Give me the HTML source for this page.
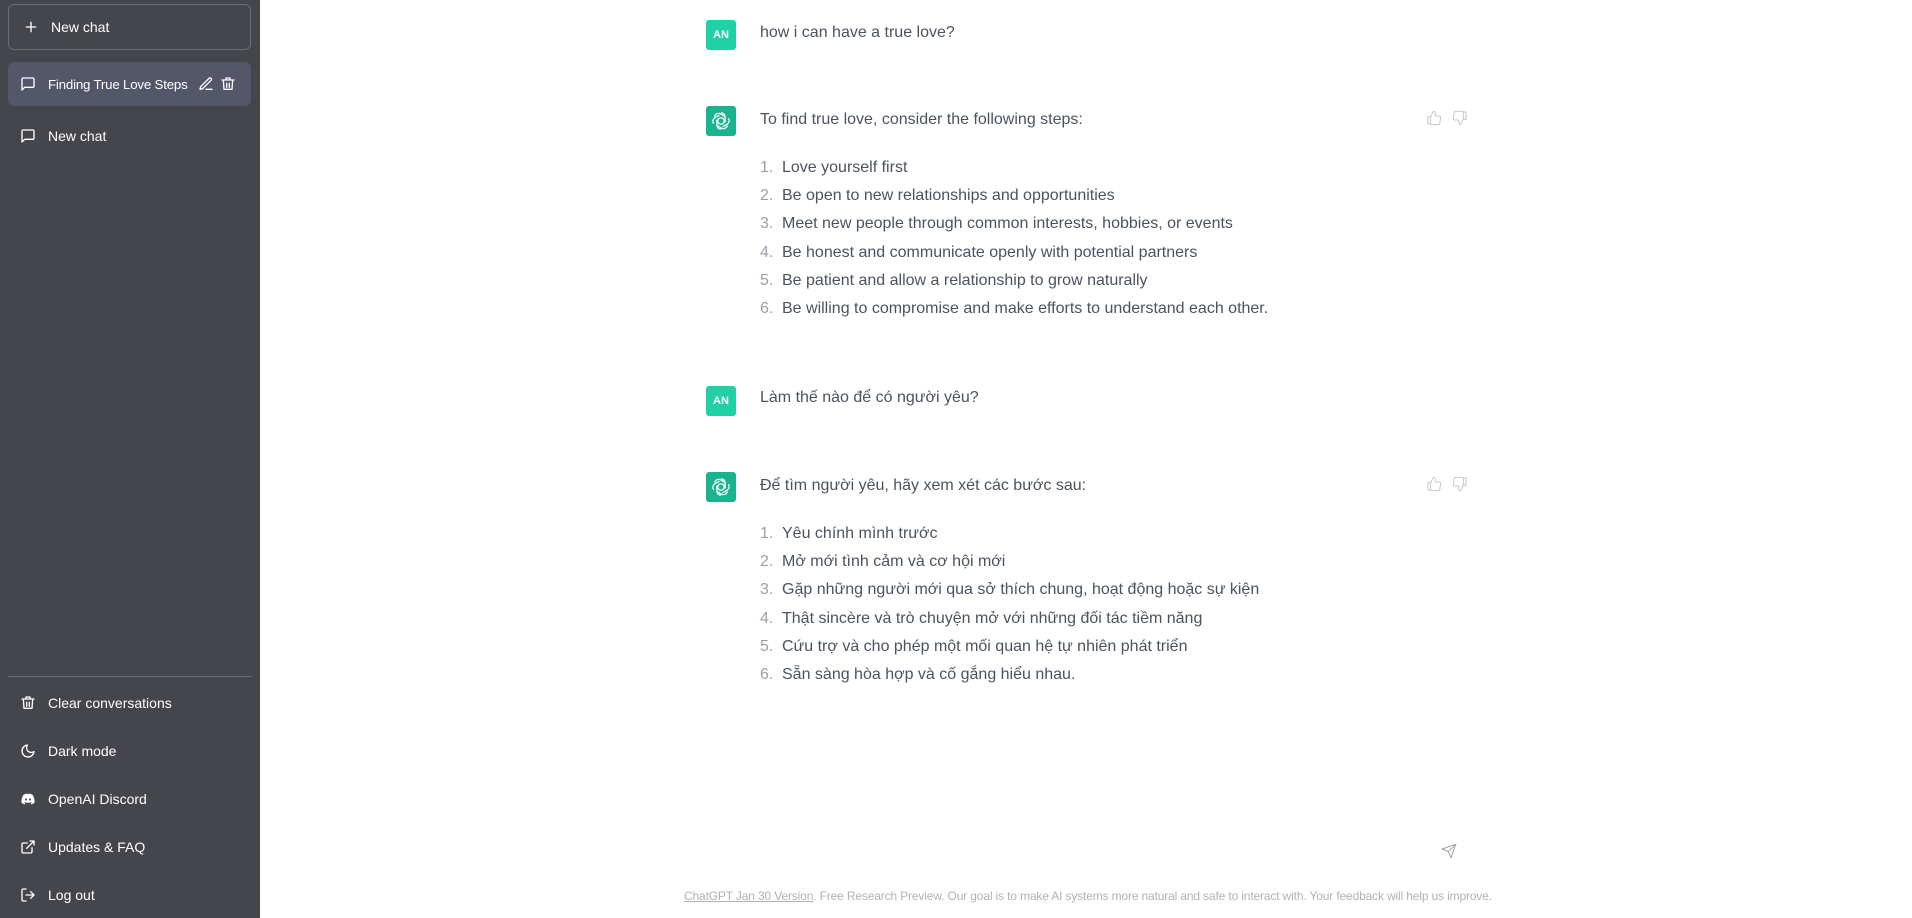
<!DOCTYPE html>
<html><head><meta charset="utf-8"><style>
*{box-sizing:border-box;margin:0;padding:0}
body{width:1912px;height:918px;overflow:hidden;background:#fff;font-family:"Liberation Sans","Noto Sans CJK SC",sans-serif;position:relative}
.sb{position:absolute;left:0;top:0;width:260px;height:918px;background:#45464b;color:#fff;font-size:14px}
.it{position:absolute;left:8px;width:243px;height:44px;display:flex;align-items:center;padding-left:12px;gap:12px;white-space:nowrap}
.it svg{width:16px;height:16px;stroke:#fff;fill:none;stroke-width:2;stroke-linecap:round;stroke-linejoin:round;flex:none}
.main{position:absolute;left:260px;top:0;right:0;height:918px;color:#4b5260;font-size:16px}
.av{position:absolute;left:446px;width:30px;height:30px;border-radius:3px;color:#fff;font-size:11px;font-weight:bold;display:flex;align-items:center;justify-content:center}
.t{position:absolute;left:500px;white-space:nowrap}
.li{position:absolute;left:500px;white-space:nowrap}
.li b{font-weight:normal;color:#9aa0aa;display:inline-block;width:22px}
.th{position:absolute;width:16px;height:16px;stroke:#c4c6cc;fill:none;stroke-width:1.5}
</style></head><body>
<div class="sb">
 <div class="it" style="top:4px;height:46px;border:1px solid #6b6c72;border-radius:6px;padding-left:14px"><svg viewBox="0 0 24 24"><path d="M12 5v14M5 12h14"/></svg><span>New chat</span></div>
 <div class="it" style="top:62px;background:#54566a;border-radius:6px"><svg viewBox="0 0 24 24"><path d="M21 15a2 2 0 0 1-2 2H7l-4 4V5a2 2 0 0 1 2-2h14a2 2 0 0 1 2 2z"/></svg><span style="font-size:13.3px;letter-spacing:-0.2px">Finding True Love Steps</span>
  <svg viewBox="0 0 24 24" style="margin-left:-2px"><path d="M12 20h9M16.5 3.5a2.1 2.1 0 0 1 3 3L7 19l-4 1 1-4z"/></svg><svg viewBox="0 0 24 24" style="margin-left:-6px"><path d="M3 6h18M19 6l-1 14H6L5 6M10 11v6M14 11v6M9 6V3h6v3"/></svg></div>
 <div class="it" style="top:114px"><svg viewBox="0 0 24 24"><path d="M21 15a2 2 0 0 1-2 2H7l-4 4V5a2 2 0 0 1 2-2h14a2 2 0 0 1 2 2z"/></svg><span>New chat</span></div>
 <div style="position:absolute;left:8px;top:676px;width:244px;height:1px;background:#6b6c72"></div>
 <div class="it" style="top:681px"><svg viewBox="0 0 24 24"><path d="M3 6h18M19 6l-1 14H6L5 6M10 11v6M14 11v6M9 6V3h6v3"/></svg><span>Clear conversations</span></div>
 <div class="it" style="top:729px"><svg viewBox="0 0 24 24"><path d="M21 12.8A9 9 0 1 1 11.2 3 7 7 0 0 0 21 12.8z"/></svg><span>Dark mode</span></div>
 <div class="it" style="top:777px"><svg viewBox="0 0 24 24" style="fill:#fff;stroke:none"><path d="M5 6c3-2 5-2 6-2l.5 1h1L13 4c1 0 3 0 6 2 2 3 3 7 3 11-2 2-4 3-5 3l-1-2 2-1-1-.5c-3 1.5-7 1.5-10 0l-1 .5 2 1-1 2c-1 0-3-1-5-3 0-4 1-8 3-11zm4 5a1.5 1.7 0 1 0 0 3.4A1.5 1.7 0 0 0 9 11zm6 0a1.5 1.7 0 1 0 0 3.4 1.5 1.7 0 0 0 0-3.4z"/></svg><span>OpenAI Discord</span></div>
 <div class="it" style="top:825px"><svg viewBox="0 0 24 24"><path d="M18 13v6a2 2 0 0 1-2 2H5a2 2 0 0 1-2-2V8a2 2 0 0 1 2-2h6M15 3h6v6M10 14 21 3"/></svg><span>Updates &amp; FAQ</span></div>
 <div class="it" style="top:873px"><svg viewBox="0 0 24 24"><path d="M9 21H5a2 2 0 0 1-2-2V5a2 2 0 0 1 2-2h4M16 17l5-5-5-5M21 12H9"/></svg><span>Log out</span></div>
</div>
<div class="main">
 <div class="av" style="top:20px;background:#1fd1a5">AN</div>
 <div class="t" style="top:24px">how i can have a true love?</div>
 <div class="av" style="top:106px;background:#19b38e"><svg width="22" height="22" viewBox="0 0 24 24" fill="none" stroke="#fff" stroke-width="1.4"><circle cx="12" cy="12" r="3.5"/><path d="M12 3a4.5 4.5 0 0 1 4.5 4.5v6M20 9a4.5 4.5 0 0 1-1 6.3l-5.2 3M19 17a4.5 4.5 0 0 1-6.6 2.7L7.2 16.7M12 21a4.5 4.5 0 0 1-4.5-4.5v-6M4 15a4.5 4.5 0 0 1 1-6.3l5.2-3M5 7a4.5 4.5 0 0 1 6.6-2.7l5.2 3"/></svg></div>
 <div class="t" style="top:111px">To find true love, consider the following steps:</div>
 <div class="li" style="top:159px"><b>1.</b>Love yourself first</div>
 <div class="li" style="top:187px"><b>2.</b>Be open to new relationships and opportunities</div>
 <div class="li" style="top:215px"><b>3.</b>Meet new people through common interests, hobbies, or events</div>
 <div class="li" style="top:244px"><b>4.</b>Be honest and communicate openly with potential partners</div>
 <div class="li" style="top:272px"><b>5.</b>Be patient and allow a relationship to grow naturally</div>
 <div class="li" style="top:300px"><b>6.</b>Be willing to compromise and make efforts to understand each other.</div>
 <svg class="th" style="left:1166px;top:110px" viewBox="0 0 24 24"><path d="M7 10v11H3V10zM7 10l4-8a3 3 0 0 1 3 3v4h6a2 2 0 0 1 2 2.3l-1.4 9A2 2 0 0 1 18.6 22H7"/></svg>
 <svg class="th" style="left:1192px;top:110px" viewBox="0 0 24 24"><path d="M17 14V3h4v11zM17 14l-4 8a3 3 0 0 1-3-3v-4H4a2 2 0 0 1-2-2.3l1.4-9A2 2 0 0 1 5.4 2H17"/></svg>
 <div class="av" style="top:386px;background:#1fd1a5">AN</div>
 <div class="t" style="top:389px">Làm thế nào để có người yêu?</div>
 <div class="av" style="top:472px;background:#19b38e"><svg width="22" height="22" viewBox="0 0 24 24" fill="none" stroke="#fff" stroke-width="1.4"><circle cx="12" cy="12" r="3.5"/><path d="M12 3a4.5 4.5 0 0 1 4.5 4.5v6M20 9a4.5 4.5 0 0 1-1 6.3l-5.2 3M19 17a4.5 4.5 0 0 1-6.6 2.7L7.2 16.7M12 21a4.5 4.5 0 0 1-4.5-4.5v-6M4 15a4.5 4.5 0 0 1 1-6.3l5.2-3M5 7a4.5 4.5 0 0 1 6.6-2.7l5.2 3"/></svg></div>
 <div class="t" style="top:477px">Để tìm người yêu, hãy xem xét các bước sau:</div>
 <div class="li" style="top:525px"><b>1.</b>Yêu chính mình trước</div>
 <div class="li" style="top:553px"><b>2.</b>Mở mới tình cảm và cơ hội mới</div>
 <div class="li" style="top:581px"><b>3.</b>Gặp những người mới qua sở thích chung, hoạt động hoặc sự kiện</div>
 <div class="li" style="top:610px"><b>4.</b>Thật sincère và trò chuyện mở với những đối tác tiềm năng</div>
 <div class="li" style="top:638px"><b>5.</b>Cứu trợ và cho phép một mối quan hệ tự nhiên phát triển</div>
 <div class="li" style="top:666px"><b>6.</b>Sẵn sàng hòa hợp và cố gắng hiểu nhau.</div>
 <svg class="th" style="left:1166px;top:476px" viewBox="0 0 24 24"><path d="M7 10v11H3V10zM7 10l4-8a3 3 0 0 1 3 3v4h6a2 2 0 0 1 2 2.3l-1.4 9A2 2 0 0 1 18.6 22H7"/></svg>
 <svg class="th" style="left:1192px;top:476px" viewBox="0 0 24 24"><path d="M17 14V3h4v11zM17 14l-4 8a3 3 0 0 1-3-3v-4H4a2 2 0 0 1-2-2.3l1.4-9A2 2 0 0 1 5.4 2H17"/></svg>
 <svg style="position:absolute;left:1181px;top:843px" width="16" height="16" viewBox="0 0 24 24" fill="none" stroke="#9ca0aa" stroke-width="1.5"><path d="M22 2 11 13M22 2l-7 20-4-9-9-4z"/></svg>
 <div style="position:absolute;left:424px;top:889px;font-size:12px;color:#aeb2b8;white-space:nowrap;letter-spacing:-0.15px"><u>ChatGPT Jan 30 Version</u>. Free Research Preview. Our goal is to make AI systems more natural and safe to interact with. Your feedback will help us improve.</div>
</div>
</body></html>
